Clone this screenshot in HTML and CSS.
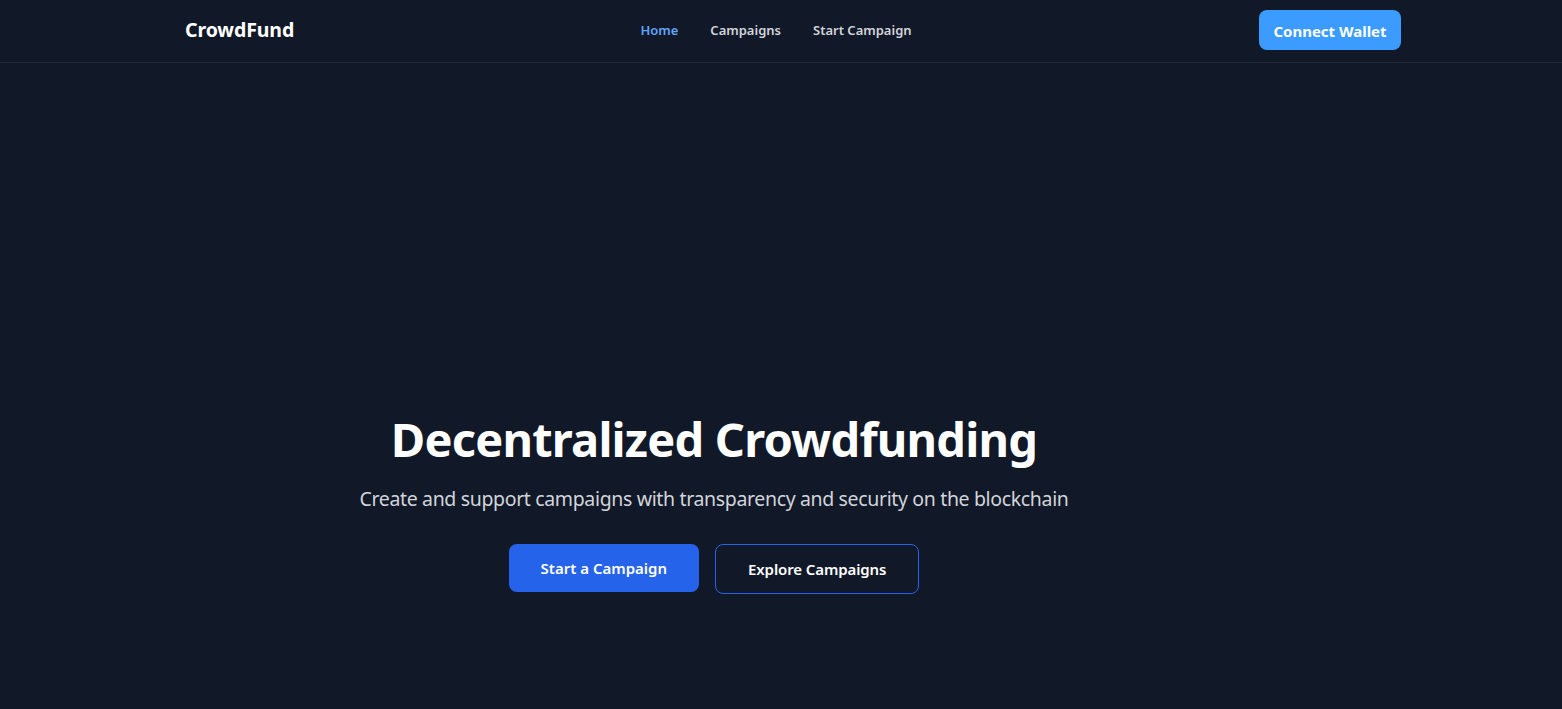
FILE: index.html
```html
<!DOCTYPE html>
<html lang="en">
<head>
<meta charset="utf-8">
<title>CrowdFund</title>
<link rel="stylesheet" href="styles.css">
</head>
<body>
<header class="navbar">
  <div class="nav-inner">
    <a class="logo" href="#">CrowdFund</a>
    <nav class="nav-links">
      <a class="nav-link active" href="#">Home</a>
      <a class="nav-link" href="#">Campaigns</a>
      <a class="nav-link" href="#">Start Campaign</a>
    </nav>
    <button class="wallet-btn">Connect Wallet</button>
  </div>
</header>
<main class="hero">
  <div class="hero-content">
    <h1 class="hero-title">Decentralized Crowdfunding</h1>
    <p class="hero-sub">Create and support campaigns with transparency and security on the blockchain</p>
    <div class="hero-actions">
      <a class="btn btn-primary" href="#">Start a Campaign</a>
      <a class="btn btn-outline" href="#">Explore Campaigns</a>
    </div>
  </div>
</main>
</body>
</html>
```
FILE: styles.css
```css
* { box-sizing: border-box; }
html, body {
  margin: 0;
  padding: 0;
  background: #111827;
  color: #ffffff;
  font-family: "Noto Sans", "Open Sans", sans-serif;
  height: 100%;
}
a { text-decoration: none; color: inherit; }

.navbar {
  border-bottom: 1px solid #1f2937;
}
.nav-inner {
  margin: 0 auto;
  width: 1216px;
  transform: translateX(12px);
  height: 62px;
  display: flex;
  align-items: center;
  justify-content: space-between;
  padding-bottom: 3px;
}
.logo {
  font-size: 19.5px;
  font-weight: 700;
  color: #ffffff;
  width: 108px;
  letter-spacing: -0.1px;
}
.nav-links {
  display: flex;
  gap: 32px;
}
.nav-link {
  font-size: 13px;
  font-weight: 600;
  color: #d1d5db;
}
.nav-link.active { color: #60a5fa; }
.wallet-btn {
  background: #3b9bff;
  color: #ffffff;
  border: none;
  border-radius: 8px;
  height: 40px;
  width: 142px;
  padding: 2px 0 0;
  font-family: inherit;
  font-size: 15px;
  font-weight: 700;
}

.hero {
  display: flex;
  justify-content: center;
  padding-top: 346px;
  padding-right: 134px;
}
.hero-content {
  display: flex;
  flex-direction: column;
  align-items: center;
  text-align: center;
}
.hero-title {
  margin: 0;
  font-size: 47px;
  letter-spacing: -0.8px;
  line-height: 60px;
  font-weight: 700;
  color: #ffffff;
}
.hero-sub {
  margin: 16px 0 0;
  font-size: 19.5px;
  letter-spacing: -0.35px;
  line-height: 28px;
  color: #d1d5db;
}
.hero-actions {
  margin-top: 31px;
  display: flex;
  gap: 16px;
  align-items: flex-start;
}
.btn {
  display: inline-block;
  font-size: 15px;
  font-weight: 600;
  line-height: 24px;
  padding: 12px 32px;
  border-radius: 8px;
  color: #ffffff;
}
.btn-primary { background: #2563eb; }
.btn-outline { border: 1px solid #2563eb; background: transparent; letter-spacing: -0.1px; }
```
